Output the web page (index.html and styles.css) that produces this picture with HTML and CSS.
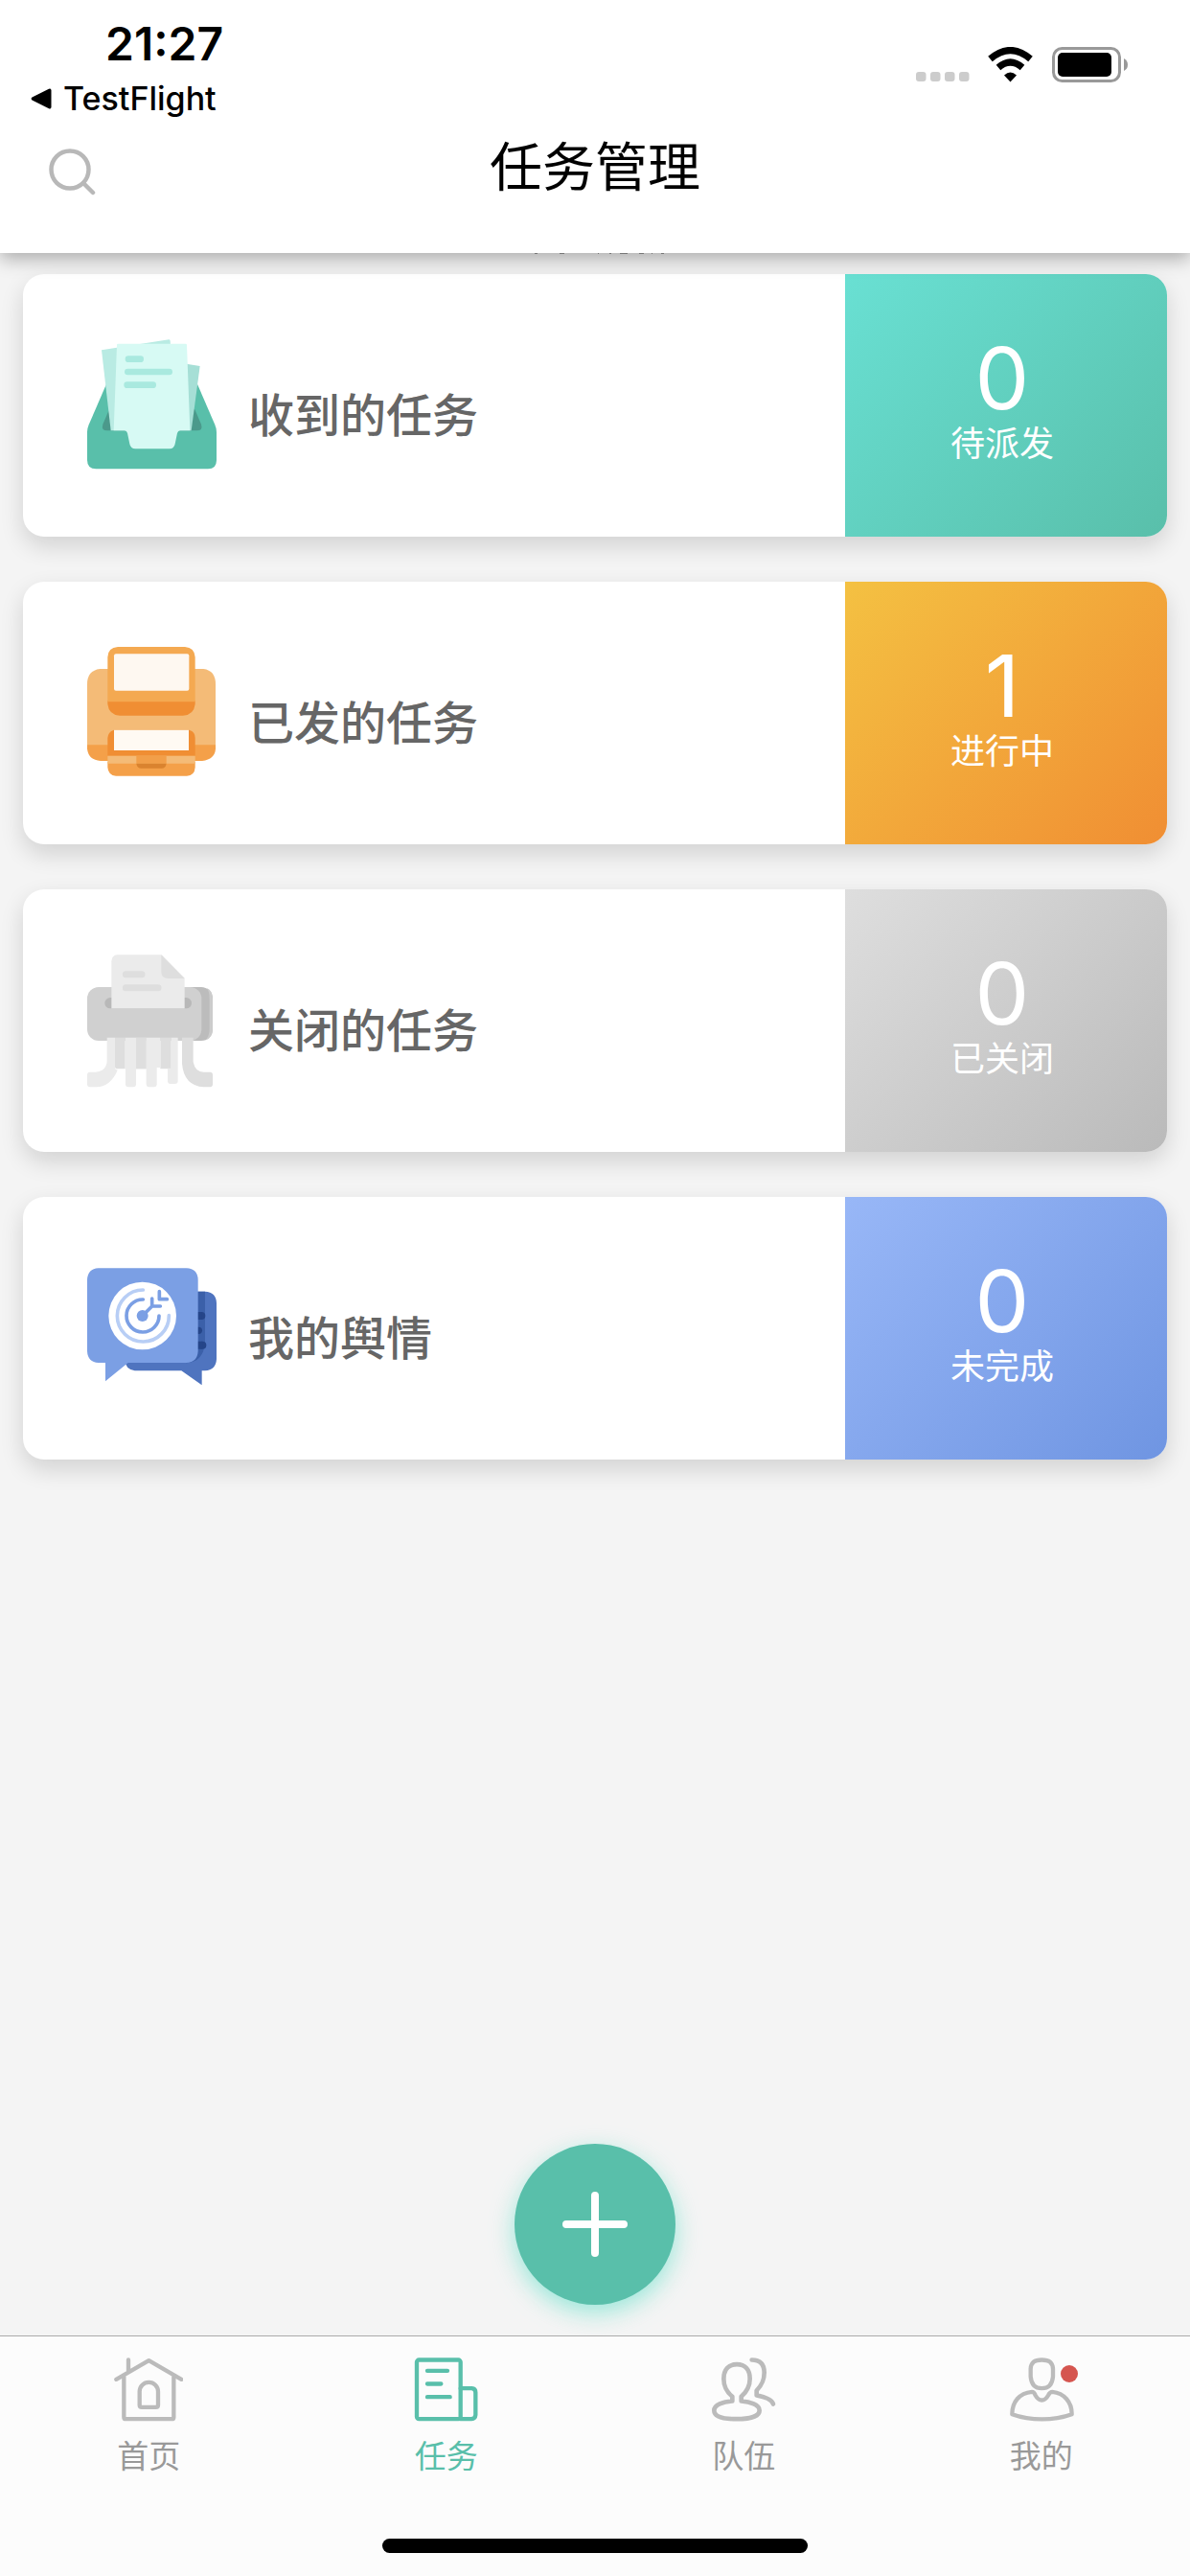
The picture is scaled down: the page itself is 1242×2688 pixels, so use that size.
FILE: index.html
```html
<!DOCTYPE html>
<html lang="zh-CN">
<head>
	<meta charset="UTF-8">
	<meta name="viewport" content="width=device-width, initial-scale=1">
	<title>任务管理</title>
	<link rel="stylesheet" href="styles.css">
</head>
<body>
	<header class="header">
		<div class="status">
			<div class="status-left">
				<span class="time">21:27</span>
				<a class="back" href="#">
					<svg width="22" height="22" viewBox="0 0 22 22"><path d="M1.500 9.500L19 .8q2.500-.8 2.500 1.700v17q0 2.500-2.500 1.700L1.500 12.500q-1.800-1.500 0-3z"/></svg>
					TestFlight
				</a>
			</div>
			<svg class="status-icons" width="222" height="38" viewBox="0 0 222 38">
				<g fill="#ccc">
					<rect x="0" y="26" width="10.500" height="10" rx="3"/>
					<rect x="15" y="26" width="10.500" height="10" rx="3"/>
					<rect x="30" y="26" width="10.500" height="10" rx="3"/>
					<rect x="45" y="26" width="10.500" height="10" rx="3"/>
				</g>
				<g fill="none" stroke="#000" stroke-width="7">
					<path d="M77.500 12.500Q98.500-5.500 119.500 12.500"/>
					<path d="M86 21.500Q98.500 10.500 111 21.500"/>
				</g>
				<path d="M92 29.500Q98.500 23.500 105 29.500L98.500 36.500z"/>
				<rect x="143.500" y="1.500" width="69" height="34" rx="9" fill="none" stroke="#999" stroke-width="3"/>
				<rect x="148" y="6" width="56" height="25" rx="5"/>
				<path d="M217 12q4 2 4 6.500t-4 6.500z" fill="#999"/>
			</svg>
		</div>
		<div class="navbar">
			<button class="search" type="button" aria-label="搜索">
				<svg width="50" height="50" viewBox="0 0 50 50" fill="none" stroke="#b8b8b8" stroke-width="4.500" stroke-linecap="round"><circle cx="23" cy="23" r="19.500"/><path d="M37 37l10 10"/></svg>
			</button>
			<h1>任务管理</h1>
		</div>
		<!-- 列表上滑后露出的边缘 -->
		<svg class="edge" width="140" height="1" viewBox="0 0 140 1" stroke="#777" stroke-width="1"><path d="M3 .5h3M29 .5h5M69 .5h1M81 .5h2M92 .5h8M112 .5h5M125 .5h1M135 .5h3"/></svg>
	</header>

	<main class="content">
		<div class="card">
			<svg class="card-icon" viewBox="0 2 414 414">
				<path fill="#59bfaa" d="M65 138L8 270Q3 282 3 292v88q0 28 28 28h350q27 0 27-28v-88q0-10-5-22L346 138z"/>
				<path fill="#4b998b" d="M72 222L52 268q-6 20 14 20h280q20 0 14-20l-20-46z"/>
				<path fill="#a6dfd6" d="M300 77l56 9-27 202h-40z"/>
				<path fill="#b9ebe3" d="M48 36L259 3q3 0 4 4l20 281H77z"/>
				<path fill="#d7faf4" d="M100 16h211q4 0 4 4l10 268h-31q-7 0-9 8l-7 34q-3 15-17 15H154q-15 0-18-15l-7-34q-2-8-9-8H86L96 20q0-4 4-4z"/>
				<g stroke="#a9e9df" stroke-width="20" stroke-linecap="round"><path d="M132 64h38M130 104h130M128 145h81"/></g>
			</svg>
			<a class="card-title" href="#">收到的任务</a>
			<div class="count green"><b>0</b><span>待派发</span></div>
		</div>
		<div class="card">
			<svg class="card-icon" viewBox="0 5 414 414">
				<path fill="#f4bb77" d="M43 74h324q38 5 38 48v192H3V122q0-43 40-48z"/>
				<path fill="#f4a049" d="M3 312h402v12q-2 34-42 38H45q-38-2-42-38z"/>
				<path fill="#f08e33" d="M67 174h274v10q-4 34-38 36H105q-34-2-38-36zM67 346v-56q2-20 20-25h235q19 5 19 25v56z"/>
				<path fill="#f4a951" d="M67 177V37Q68 7 99 5h210q30 2 32 32v140z"/>
				<rect fill="#fef8f1" x="87" y="27" width="235" height="115" rx="6"/>
				<path fill="#fffaf3" d="M87 265h234v64H87z"/>
				<path fill="#f4a049" d="M67 364h274v18q-2 26-26 27H93q-24-2-26-27z"/>
				<path fill="#f4bb77" d="M67 346h274v24H67z"/>
				<path fill="#f29f49" d="M157 346h94v24h-94z"/>
				<path fill="#da832f" d="M157 370h94q-2 15-15 15h-64q-13 0-15-15z"/>
			</svg>
			<a class="card-title" href="#">已发的任务</a>
			<div class="count orange"><b>1</b><span>进行中</span></div>
		</div>
		<div class="card">
			<svg class="card-icon" viewBox="0 8 414 414">
				<rect fill="#bcbcbc" x="240" y="110" width="156" height="168" rx="36"/>
				<path fill="#ccc" d="M378 113q18 8 18 34v94q0 28-22 35 12-14 12-35v-94q0-22-8-34z"/>
				<rect fill="#d0d0d0" x="3" y="110" width="358" height="168" rx="36"/>
				<rect fill="#b8b8b8" x="58" y="143" width="272" height="34" rx="17"/>
				<path fill="#ebebeb" d="M79 177V30q1-20 18-21h138l73 73v95z"/>
				<path fill="#dedede" d="M235 9l73 74h-53q-20-1-20-21z"/>
				<path stroke="#dedede" stroke-width="21" stroke-linecap="round" d="M124 70h50M124 112h101"/>
				<!-- 纸条 -->
				<path fill="#dedede" d="M90 268h32v98h-24q-8 0-8-8zM156 268h32v98h-32zM232 268h34v98h-34v-50zM232 268v0z"/>
				<path fill="#dedede" d="M156 268h32v98h-32z"/>
				<path fill="#ebebeb" d="M65 268h25v92q0 10 8 10Q76 422 31 423H12q-9 0-9-9v-29q0-9 9-9h17q36-3 36-38z"/>
				<path fill="#ebebeb" d="M122 268h34v146q0 9-9 9h-15q-9 0-9-9v-46l-1-8zM188 268h44v94h-11v52q0 9-9 9h-15q-9 0-9-9z"/>
				<path fill="#ebebeb" d="M266 268h21v136q0 9-9 9h-14q-9 0-9-9v-40h11z"/>
				<path fill="#dedede" d="M300 268h35v76q6 32 33 32h20q8 0 8 9v29q0 9-8 9h-20q-62-4-68-73z"/>
			</svg>
			<a class="card-title" href="#">关闭的任务</a>
			<div class="count gray"><b>0</b><span>已关闭</span></div>
		</div>
		<div class="card">
			<svg class="card-icon" viewBox="0 11 414 414">
				<path fill="#4f74bf" d="M152 103h220q35 2 36 36v176q-2 34-36 36h-10v45l-64-45H152q-30-4-32-36V139q2-34 32-36z"/>
				<path fill="#3b60a9" d="M340 103h32v158q-4 64-60 66z"/>
				<g fill="#254589"><circle cx="361" cy="179" r="12"/><circle cx="352" cy="225" r="11"/><circle cx="364" cy="271" r="12"/><path d="M340 167h21v24h-21zM340 259h24v24h-24z"/></g>
				<path fill="#7b9fe4" d="M38 30h276q35 2 36 36v224q-2 34-36 36H131l-71 58v-58H38q-33-2-35-36V66q2-34 35-36z"/>
				<circle cx="176" cy="179" r="106" fill="#fff"/>
				<g fill="none" stroke="#7b9fe4" stroke-width="11" stroke-linecap="round">
					<path stroke="#b8cef5" d="M178 98a81 81 0 1 0 81 80"/>
					<path d="M178 128a51 51 0 1 0 50 51"/>
					<path d="M176 179l30-30h26M206 149v-24M229 103v24h24" stroke-linejoin="round"/>
				</g>
				<circle cx="176" cy="179" r="18" fill="#7b9fe4"/>
			</svg>
			<a class="card-title" href="#">我的舆情</a>
			<div class="count blue"><b>0</b><span>未完成</span></div>
		</div>

		<button class="add" type="button" aria-label="新建任务">
			<svg width="68" height="68" viewBox="0 0 68 68" stroke="#fff" stroke-width="8" stroke-linecap="round"><path d="M34 4v60M4 34h60"/></svg>
		</button>
	</main>

	<footer class="footer">
		<nav class="tabs">
			<a class="tab" href="#">
				<svg viewBox="0 0 216 200"><g fill="none" stroke="#bbb" stroke-width="13" stroke-linecap="round" stroke-linejoin="round"><path d="M7 68L109 9l102 59M45 44V7M31 60v126q0 6 6 6h144q6 0 6-6V60"/><path d="M80 148v-42a28 28 0 0 1 58 0v42q0 7-7 7H87q-7 0-7-7z"/></g></svg>
				<span>首页</span>
			</a>
			<a class="tab active" href="#">
				<svg viewBox="0 0 216 200"><g fill="none" stroke="#59bfaa" stroke-width="13" stroke-linecap="round" stroke-linejoin="round"><rect x="15" y="7" width="137" height="185" rx="7"/><path d="M152 96h35q12 1 12 13v70q-1 12-13 13h-34M48 41h63M48 82h43M48 123h71"/></g></svg>
				<span>任务</span>
			</a>
			<a class="tab" href="#">
				<svg viewBox="0 0 216 200"><g fill="none" stroke="#bbb" stroke-width="14" stroke-linecap="round" stroke-linejoin="round"><path d="M73 136v-14C53 105 46 90 46 66c0-28 15-45 41-45s41 17 41 45c0 24-8 39-27 56v14c28 2 57 12 57 29 0 18-30 27-72 27s-70-8-70-27c0-18 28-27 57-29z"/><path d="M134 7c26 0 39 14 39 40 0 24-7 38-24 56v15c22 4 47 12 52 27"/></g></svg>
				<span>队伍</span>
			</a>
			<a class="tab" href="#">
				<svg viewBox="0 0 216 200"><g fill="none" stroke="#bbb" stroke-width="13" stroke-linecap="round" stroke-linejoin="round"><path d="M74 35c1-19 11-28 35-28s34 9 35 28v24c-2 24-14 37-35 37S76 83 74 59z"/><path d="M16 177c0-38 22-66 62-70 8 0 8 5 11 11 5 9 11 15 20 15s15-6 20-15c3-6 5-11 13-11 37 4 61 32 61 70-58 21-129 21-187 0z"/></g></svg>
				<i class="dot"></i>
				<span>我的</span>
			</a>
		</nav>
		<div class="home-bar"></div>
	</footer>
</body>
</html>
```

FILE: styles.css
```css
* {
	box-sizing:border-box;
}
body {
	margin:0;
	min-height:100vh;
	display:flex;
	flex-direction:column;
	background:#f4f4f4;
	font-family:"Noto Sans CJK SC", sans-serif;
	color:#000;
}
a {
	color:inherit;
	text-decoration:none;
}
button {
	border:0;
	padding:0;
	background:none;
	cursor:pointer;
}
svg {
	display:block;
}
/* 顶部 */
.header {
	position:relative;
	background:#fff;
	box-shadow:0 6px 18px rgba(0,0,0,.3);
}
.status {
	display:flex;
	justify-content:space-between;
	align-items:flex-start;
	padding:16px 64px 0 32px;
	font-family:Inter, sans-serif;
}
.status-left {
	display:flex;
	flex-direction:column;
}
.time {
	padding-left:78px;
	font-size:48px;
	line-height:60px;
	font-weight:600;
}
.back {
	display:flex;
	align-items:center;
	gap:12px;
	font-size:34px;
	line-height:54px;
	font-weight:500;
}
.status-icons {
	margin-top:33px;
}
.navbar {
	display:grid;
	grid-template-columns:1fr auto 1fr;
	align-items:center;
	padding:0 50px 54px;
}
.search {
	justify-self:start;
	padding-top:18px;
}
.navbar h1 {
	margin:0;
	font-size:55px;
	line-height:80px;
	font-weight:400;
}
.edge {
	position:absolute;
	top:100%;
	left:calc(50% - 66px);
}
/* 任务卡片 */
.content {
	flex:1;
	display:flex;
	flex-direction:column;
	padding:22px 24px 32px;
}
.card {
	display:flex;
	align-items:center;
	height:274px;
	margin-bottom:47px;
	padding-left:66px;
	border-radius:22px;
	background:#fff;
	box-shadow:0 10px 24px rgba(0,0,0,.14);
	overflow:hidden;
}
.card-icon {
	width:138px;
	height:138px;
	overflow:visible;
}
.card-title {
	flex:1;
	padding:14px 0 0 31px;
	font-size:48px;
	line-height:72px;
	font-weight:500;
	color:#666;
}
.count {
	width:336px;
	height:100%;
	padding:0 8px 10px 0;
	display:flex;
	flex-direction:column;
	align-items:center;
	justify-content:center;
	color:#fff;
}
.count b {
	font-family:Inter, sans-serif;
	font-size:90px;
	line-height:84px;
	font-weight:400;
}
.count span {
	font-size:36px;
	line-height:46px;
	font-weight:400;
}
.green {
	background:linear-gradient(135deg, #69e0d3, #59bfaa);
}
.orange {
	background:linear-gradient(135deg, #f4c142, #f08e33);
}
.gray {
	background:linear-gradient(135deg, #dedede, #bababa);
}
.blue {
	background:linear-gradient(135deg, #98b7f7, #6f95e2);
}
.add {
	display:flex;
	align-items:center;
	justify-content:center;
	width:168px;
	height:168px;
	margin:auto auto 0;
	border-radius:50%;
	background:#59bfaa;
	box-shadow:0 8px 24px rgba(105,224,203,.65);
}
/* 底部导航 */
.footer {
	border-top:1px solid #aaa;
	background:#fcfcfc;
	padding-bottom:24px;
}
.tabs {
	display:flex;
	padding:22px 0 64px;
}
.tab {
	position:relative;
	flex:1;
	display:flex;
	flex-direction:column;
	align-items:center;
	font-size:33px;
	line-height:48px;
	font-weight:400;
	color:#999;
}
.tab svg {
	width:72px;
	height:67px;
	margin-bottom:10px;
}
.active {
	color:#59bfaa;
}
.dot {
	position:absolute;
	top:8px;
	left:calc(50% + 20px);
	width:18px;
	height:18px;
	border-radius:50%;
	background:#d5554f;
}
.home-bar {
	width:444px;
	max-width:60%;
	height:15px;
	margin:0 auto;
	border-radius:8px;
	background:#000;
}
```
